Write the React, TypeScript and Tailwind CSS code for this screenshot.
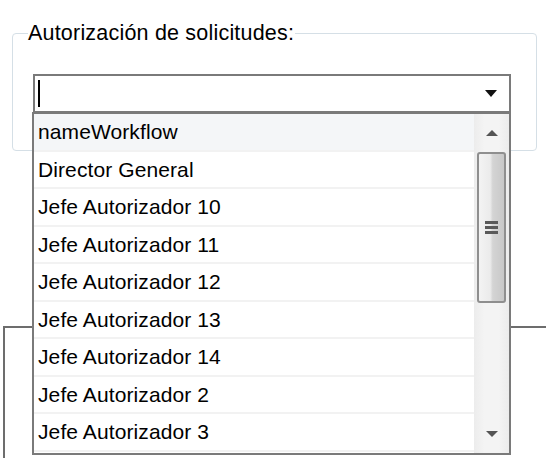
import React from "react";

const items = [
  "nameWorkflow",
  "Director General",
  "Jefe Autorizador 10",
  "Jefe Autorizador 11",
  "Jefe Autorizador 12",
  "Jefe Autorizador 13",
  "Jefe Autorizador 14",
  "Jefe Autorizador 2",
  "Jefe Autorizador 3",
];

export default function App() {
  return (
    <div
      className="relative w-[546px] h-[458px] bg-white overflow-hidden text-black"
      style={{ fontFamily: '"Liberation Sans", Arial, sans-serif' }}
    >
      {/* background group box partially hidden */}
      <div className="absolute left-[3px] top-[326px] w-[600px] h-[200px] border-l-2 border-t-2 border-[#6d6d6d]" />

      {/* group box */}
      <div className="relative ml-[12px] mt-[33px] w-[525px] h-[118px] border border-[#d5dfe6] rounded-[4px] bg-white">
        <div className="absolute left-[15px] top-[-14px] bg-white pr-[1px] text-[21.5px] leading-[26px] tracking-[0.2px]">
          Autorización de solicitudes:
        </div>
        {/* combo box */}
        <div className="absolute left-[20px] top-[40px] w-[478px] h-[39px] border-2 border-[#7a7a7a] bg-white flex items-center">
          <div className="ml-[3px] w-[2px] h-[27px] bg-black" />
          <svg className="ml-auto mr-[12px]" width="12" height="7" viewBox="0 0 12 7">
            <polygon points="0,0 12,0 6,7" fill="#111" />
          </svg>
        </div>
      </div>

      {/* dropdown list */}
      <div className="absolute left-[32px] top-[112px] w-[479px] h-[343px] border-2 border-[#7a7a7a] bg-white flex">
        <div className="flex-1 flex flex-col">
          {items.map((t, i) => (
            <div
              key={t}
              className={
                "h-[37.5px] flex items-center pl-[4px] text-[21px] tracking-[0.1px] border-b-2 border-[#f2f2f2] " +
                (i === 0 ? "bg-[#f4f6f8]" : "bg-white")
              }
            >
              {t}
            </div>
          ))}
        </div>
        {/* scrollbar */}
        <div className="w-[35px] h-full flex flex-col items-center bg-[linear-gradient(90deg,#ececec_0%,#f4f4f4_30%,#f4f4f4_70%,#ececec_100%)]">
          <div className="h-[38px] flex items-center justify-center">
            <svg width="12" height="6" viewBox="0 0 12 6">
              <polygon points="0,6 12,6 6,0" fill="#555" />
            </svg>
          </div>
          <div className="w-[29px] h-[151px] rounded-[3px] border-2 border-[#8f8f8f] bg-[linear-gradient(90deg,#f3f3f3_0%,#ebebeb_45%,#d4d4d4_55%,#c8c8c8_100%)] flex flex-col items-center justify-center gap-[2px]">
            <div className="w-[13px] h-[3px] bg-[#5a5a5a]" />
            <div className="w-[13px] h-[3px] bg-[#5a5a5a]" />
            <div className="w-[13px] h-[3px] bg-[#5a5a5a]" />
          </div>
          <div className="flex-1" />
          <div className="h-[38px] flex items-center justify-center">
            <svg width="12" height="6" viewBox="0 0 12 6">
              <polygon points="0,0 12,0 6,6" fill="#555" />
            </svg>
          </div>
        </div>
      </div>
    </div>
  );
}
